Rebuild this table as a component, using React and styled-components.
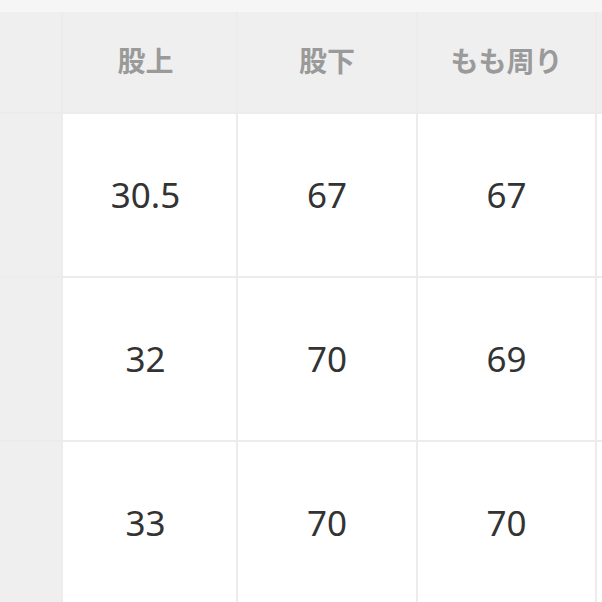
import React from 'react';
import styled, { createGlobalStyle } from 'styled-components';

const GlobalStyle = createGlobalStyle`
  html, body {
    margin: 0;
    padding: 0;
    background: #f6f6f6;
    overflow: hidden;
  }
  body {
    font-family: "Noto Sans", "Noto Sans CJK JP", sans-serif;
  }
`;

const columns = ['股上', '股下', 'もも周り', ''];

const rows = [
    ['30.5', '67', '67', ''],
    ['32', '70', '69', ''],
    ['33', '70', '70', ''],
];

const App = () => {
    return (
        <>
            <GlobalStyle />
            <Page>
                <TopStrip />
                <SizeTable>
                    <SideCell />
                    {columns.map((name, index) => (
                        <HeadCell key={index} $first={index === 0}>{name}</HeadCell>
                    ))}
                    {rows.map((row, rowIndex) => (
                        <React.Fragment key={rowIndex}>
                            <SideCell />
                            {row.map((value, index) => (
                                <ValueCell key={index} $first={index === 0}>{value}</ValueCell>
                            ))}
                        </React.Fragment>
                    ))}
                </SizeTable>
            </Page>
        </>
    );
};

const Page = styled.div`
  width: 602px;
  height: 602px;
  overflow: hidden;
`;

const TopStrip = styled.div`
  height: 12px;
  background: #f6f6f6;
`;

const SizeTable = styled.div`
  display: grid;
  grid-template-columns: 61px 173px 178px 177px 100px;
  grid-template-rows: 100px 162px 162px 162px;
  gap: 2px;
  background: #ececec;
  width: 700px;
`;

const SideCell = styled.div`
  background: #efefef;
`;

const HeadCell = styled.div`
  background: #efefef;
  display: flex;
  align-items: center;
  justify-content: center;
  padding-bottom: 4px;
  padding-right: ${(p) => (p.$first ? '8px' : '0')};
  color: #9a9a9a;
  font-family: "Noto Sans CJK JP", "Noto Sans", sans-serif;
  font-weight: 700;
  font-size: 28px;
`;

const ValueCell = styled.div`
  background: #fff;
  display: flex;
  align-items: center;
  justify-content: center;
  padding-right: ${(p) => (p.$first ? '8px' : '0')};
  padding-bottom: 2px;
  color: #333;
  font-size: 35px;
`;

export default App;
